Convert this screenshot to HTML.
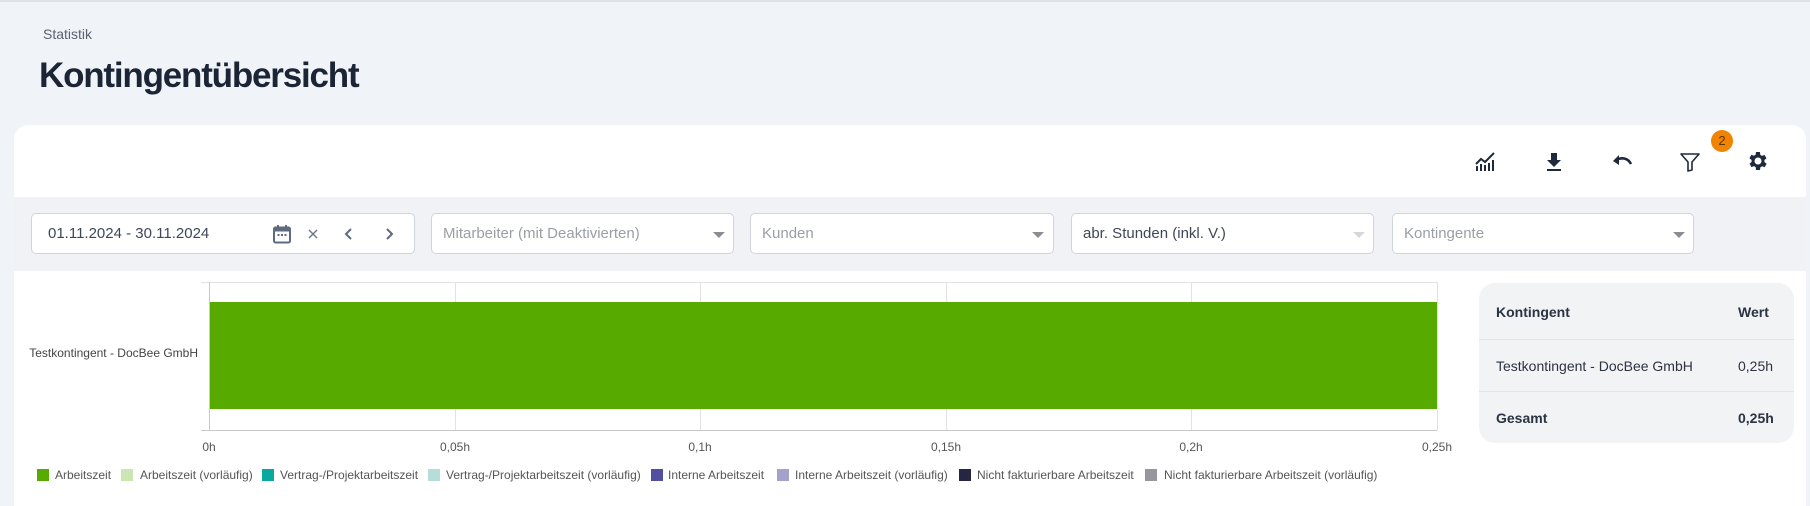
<!DOCTYPE html>
<html><head><meta charset="utf-8"><style>
*{box-sizing:border-box;margin:0;padding:0}
body{width:1810px;height:506px;background:#f0f3f7;font-family:"Liberation Sans",sans-serif;position:relative;overflow:hidden;color:#1e2a3b}
.abs{position:absolute}
.topline{left:0;top:0;width:1810px;height:2px;background:#dde1e6}
.stat{left:43px;top:26px;font-size:14px;color:#5a6372}
.title{left:39px;top:56px;font-size:35px;font-weight:bold;letter-spacing:-1.2px;color:#1b2536;white-space:nowrap}
.card{left:14px;top:125px;width:1792px;height:381px;background:#fff;border-radius:14px 14px 0 0}
.band{left:14px;top:197px;width:1792px;height:74px;background:#f1f2f5}
.inp{top:213px;height:41px;background:#fff;border:1px solid #cfd4dd;border-radius:5px;font-size:15px}
.inp span{position:absolute;left:11px;top:11px;color:#9a9ea5}
.caret{position:absolute;top:18px;width:0;height:0;border-left:6px solid transparent;border-right:6px solid transparent;border-top:6px solid #8a8d92}
.ico{position:absolute}
.tick{position:absolute;font-size:12px;color:#555;font-family:"Liberation Sans Narrow","Liberation Sans",sans-serif;transform:translateX(-50%)}
.vg{position:absolute;top:282px;width:1px;height:148px;background:#e2e2e2}
.leg{position:absolute;top:468px;font-size:12px;color:#555;font-family:"Liberation Sans Narrow","Liberation Sans",sans-serif;white-space:nowrap}
.sq{position:absolute;top:469px;width:12px;height:12px}
.tbl{left:1479px;top:283px;width:315px;height:160px;background:#f2f3f5;border-radius:16px;font-size:14px;color:#2a3342}
.tbl .r{position:absolute;left:0;width:315px;border-top:1px solid #e1e3e8}
</style></head><body>
<div class="abs topline"></div>
<div class="abs stat">Statistik</div>
<div class="abs title">Kontingentübersicht</div>
<div class="abs card"></div>
<div class="abs band"></div>

<svg class="ico" style="left:1475px;top:151px" width="22" height="22" viewBox="0 0 22 22"><g fill="#1e2a3b"><rect x="1" y="15" width="2" height="5"/><rect x="5" y="13" width="2" height="7"/><rect x="9" y="14" width="2" height="6"/><rect x="13" y="12" width="2" height="8"/><rect x="17" y="9" width="2" height="11"/></g><path d="M1 13 L6 8 L10 11 L17 4 L19 2" stroke="#1e2a3b" stroke-width="2" fill="none"/></svg>
<svg class="ico" style="left:1544px;top:151px" width="20" height="22" viewBox="0 0 20 22"><path d="M7 2h6v7h4l-7 7-7-7h4z" fill="#1e2a3b"/><rect x="3" y="18" width="14" height="2" fill="#1e2a3b"/></svg>
<svg class="ico" style="left:1611px;top:152px" width="22" height="20" viewBox="0 0 22 20"><path d="M8 3 L2 9 L8 13 Z" fill="#1e2a3b"/><path d="M5 8 C11 5 17 6 20 12" stroke="#1e2a3b" stroke-width="2.6" fill="none"/></svg>
<svg class="ico" style="left:1679px;top:151px" width="22" height="22" viewBox="0 0 22 22"><path d="M2 3 H20 L13 11 V19 L9 20 V11 Z" stroke="#1e2a3b" stroke-width="1.6" fill="none" stroke-linejoin="round"/></svg>
<div class="abs" style="left:1711px;top:130px;width:22px;height:22px;border-radius:50%;background:#f08400;color:#5a3300;font-size:13px;text-align:center;line-height:22px">2</div>
<svg class="ico" style="left:1746px;top:149px" width="24" height="24" viewBox="0 0 24 24"><path fill="#1e2a3b" fill-rule="evenodd" d="M19.4 13a7.5 7.5 0 0 0 0-2l2.1-1.6-2-3.5-2.5 1a7.3 7.3 0 0 0-1.7-1L15 3h-4l-.4 2.7a7.3 7.3 0 0 0-1.7 1l-2.5-1-2 3.5L6.6 11a7.5 7.5 0 0 0 0 2l-2.1 1.6 2 3.5 2.5-1a7.3 7.3 0 0 0 1.7 1L11 21h4l.4-2.7a7.3 7.3 0 0 0 1.7-1l2.5 1 2-3.5zM13 15.5a3.5 3.5 0 1 1 0-7 3.5 3.5 0 0 1 0 7z" transform="translate(-1 0)"/></svg>

<div class="abs inp" style="left:31px;width:384px">
  <span style="color:#3f4756;left:16px">01.11.2024 - 30.11.2024</span>
  <svg class="ico" style="left:240px;top:10px" width="20" height="20" viewBox="0 0 20 20"><rect x="2" y="3.5" width="16" height="15" rx="1.5" stroke="#5d6a80" stroke-width="2" fill="none"/><rect x="2" y="3.5" width="16" height="4" fill="#5d6a80"/><rect x="5" y="1" width="2" height="4" fill="#5d6a80"/><rect x="13" y="1" width="2" height="4" fill="#5d6a80"/><rect x="5.5" y="10" width="2" height="2" fill="#5d6a80"/><rect x="9" y="10" width="2" height="2" fill="#5d6a80"/><rect x="12.5" y="10" width="2" height="2" fill="#5d6a80"/></svg>
  <svg class="ico" style="left:275px;top:14px" width="12" height="12" viewBox="0 0 12 12"><path d="M2 2L10 10M10 2L2 10" stroke="#6b7587" stroke-width="1.4"/></svg>
  <svg class="ico" style="left:312px;top:13px" width="10" height="14" viewBox="0 0 10 14"><path d="M7 2L2 7L7 12" stroke="#5d6a80" stroke-width="2" fill="none"/></svg>
  <svg class="ico" style="left:352px;top:13px" width="10" height="14" viewBox="0 0 10 14"><path d="M3 2L8 7L3 12" stroke="#5d6a80" stroke-width="2" fill="none"/></svg>
</div>
<div class="abs inp" style="left:431px;width:303px"><span>Mitarbeiter (mit Deaktivierten)</span><div class="caret" style="left:281px"></div></div>
<div class="abs inp" style="left:750px;width:304px"><span>Kunden</span><div class="caret" style="left:281px"></div></div>
<div class="abs inp" style="left:1071px;width:303px"><span style="color:#3f4756">abr. Stunden (inkl. V.)</span><div class="caret" style="left:281px;border-top-color:#d5d7da"></div></div>
<div class="abs inp" style="left:1392px;width:302px"><span>Kontingente</span><div class="caret" style="left:280px"></div></div>

<div class="abs" style="left:201px;top:282px;width:1236px;height:1px;background:#e2e2e2"></div>
<div class="vg" style="left:209px;background:#c8c8c8"></div>
<div class="vg" style="left:455px"></div>
<div class="vg" style="left:700px"></div>
<div class="vg" style="left:946px"></div>
<div class="vg" style="left:1191px"></div>
<div class="vg" style="left:1437px"></div>
<div class="abs" style="left:201px;top:430px;width:1236px;height:1px;background:#c8c8c8"></div>
<div class="abs" style="left:210px;top:302px;width:1227px;height:107px;background:#56aa00"></div>
<div class="abs" style="left:18px;top:346px;width:180px;text-align:right;font-size:12px;color:#444;font-family:'Liberation Sans Narrow','Liberation Sans',sans-serif">Testkontingent - DocBee GmbH</div>
<div class="tick" style="left:209px;top:440px">0h</div>
<div class="tick" style="left:455px;top:440px">0,05h</div>
<div class="tick" style="left:700px;top:440px">0,1h</div>
<div class="tick" style="left:946px;top:440px">0,15h</div>
<div class="tick" style="left:1191px;top:440px">0,2h</div>
<div class="tick" style="left:1437px;top:440px">0,25h</div>

<div class="sq" style="left:37px;background:#56aa00"></div><div class="leg" style="left:55px">Arbeitszeit</div>
<div class="sq" style="left:121px;background:#cce6b3"></div><div class="leg" style="left:140px">Arbeitszeit (vorläufig)</div>
<div class="sq" style="left:262px;background:#0aa99f"></div><div class="leg" style="left:280px">Vertrag-/Projektarbeitszeit</div>
<div class="sq" style="left:428px;background:#b5ddd9"></div><div class="leg" style="left:446px">Vertrag-/Projektarbeitszeit (vorläufig)</div>
<div class="sq" style="left:651px;background:#524f9e"></div><div class="leg" style="left:668px">Interne Arbeitszeit</div>
<div class="sq" style="left:777px;background:#a4a2cd"></div><div class="leg" style="left:795px">Interne Arbeitszeit (vorläufig)</div>
<div class="sq" style="left:959px;background:#262544"></div><div class="leg" style="left:977px">Nicht fakturierbare Arbeitszeit</div>
<div class="sq" style="left:1145px;background:#97969f"></div><div class="leg" style="left:1164px">Nicht fakturierbare Arbeitszeit (vorläufig)</div>

<div class="abs tbl">
  <div style="position:absolute;left:17px;top:21px;font-weight:bold">Kontingent</div>
  <div style="position:absolute;left:259px;top:21px;font-weight:bold">Wert</div>
  <div class="r" style="top:56px"></div>
  <div style="position:absolute;left:17px;top:75px">Testkontingent - DocBee GmbH</div>
  <div style="position:absolute;left:259px;top:75px">0,25h</div>
  <div class="r" style="top:108px"></div>
  <div style="position:absolute;left:17px;top:127px;font-weight:bold">Gesamt</div>
  <div style="position:absolute;left:259px;top:127px;font-weight:bold">0,25h</div>
</div>
<div class="abs" style="left:1806px;top:271px;width:4px;height:235px;background:#f0f3f7"></div>
</body></html>
